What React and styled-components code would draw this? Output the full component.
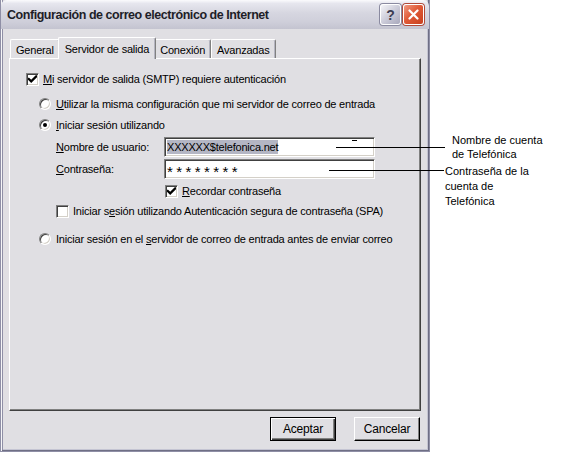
import styled, { createGlobalStyle } from "styled-components";

const GlobalStyle = createGlobalStyle`
  html, body {
    margin: 0;
    padding: 0;
    background: #ffffff;
  }
  body {
    font-family: "Liberation Sans", Arial, sans-serif;
    font-size: 11px;
    letter-spacing: -0.2px;
    color: #000;
  }
`;

const Stage = styled.div`
  position: relative;
  width: 580px;
  height: 452px;
  overflow: hidden;
`;

// ventana del diálogo (tema plateado de XP)
const Window = styled.div`
  width: 430px;
  height: 452px;
  box-sizing: border-box;
  display: flex;
  flex-direction: column;
  background: #e0dfe3;
  border: 1px solid #8f8fa6;
  border-top: none;
  box-shadow: inset 1px 0 #f6f6f8, inset -1px 0 #6f6f85, inset 0 -1px #6f6f85, inset 2px 0 #8f8fa6, inset -2px 0 #c4c4d2, inset 0 -2px #c4c4d2;
`;

const TitleBar = styled.div`
  height: 29px;
  flex: none;
  display: flex;
  align-items: center;
  padding: 0 5px 0 6px;
  background: linear-gradient(#fbfbfd 0%, #e6e6ee 12%, #d6d6e0 45%, #cfcfda 75%, #c4c4d0 100%);
  border-top-left-radius: 6px;
  border-top-right-radius: 6px;
`;

const Title = styled.span`
  flex: 1;
  font-family: "Liberation Sans", "DejaVu Sans", sans-serif;
  font-weight: bold;
  font-size: 12.5px;
  letter-spacing: -0.45px;
  color: #1e1e28;
`;

const CaptionButton = styled.div`
  width: 21px;
  height: 21px;
  box-sizing: border-box;
  border-radius: 3px;
  border: 1px solid #ffffff;
  margin-left: 2px;
  display: flex;
  align-items: center;
  justify-content: center;
  background: ${(p) =>
    p.$close
      ? "linear-gradient(135deg, #f09a82 0%, #e05a38 45%, #c8401e 100%)"
      : "linear-gradient(135deg, #f4f4f8 0%, #c8c8d6 55%, #a8a8bc 100%)"};
  box-shadow: 0 0 0 1px ${(p) => (p.$close ? "#b04a3a" : "#8a8aa0")};
  font-family: "Liberation Sans", sans-serif;
  font-weight: bold;
  font-size: 14px;
  color: #3c3c50;
`;

const Body = styled.div`
  flex: 1;
  display: flex;
  flex-direction: column;
  padding: 7px 8px 0 8px;
`;

const TabList = styled.div`
  display: flex;
  align-items: flex-end;
  height: 22px;
  padding-left: 1px;
  position: relative;
  z-index: 1;
`;

const Tab = styled.div`
  height: ${(p) => (p.$active ? "22px" : "19px")};
  box-sizing: border-box;
  padding: 0 ${(p) => (p.$active ? "6px" : "5px")};
  margin: ${(p) => (p.$active ? "0 -2px -1px -2px" : "0")};
  display: flex;
  align-items: center;
  padding-top: ${(p) => (p.$active ? "0" : "2px")};
  background: #e0dfe3;
  border-top: 1px solid #ffffff;
  border-left: 1px solid #ffffff;
  border-right: 1px solid #808080;
  box-shadow: inset -1px 0 #b4b4c0;
  border-top-left-radius: 2px;
  border-top-right-radius: 2px;
  position: relative;
  z-index: ${(p) => (p.$active ? 2 : 1)};
`;

const Panel = styled.div`
  height: 353px;
  box-sizing: border-box;
  border-top: 1px solid #ffffff;
  border-left: 1px solid #ffffff;
  border-right: 1px solid #404040;
  border-bottom: 1px solid #404040;
  box-shadow: inset -1px -1px #808080;
  display: flex;
  flex-direction: column;
  padding-top: 12px;
`;

const Row = styled.div`
  display: flex;
  align-items: center;
  height: ${(p) => p.$h || 16}px;
  margin-top: ${(p) => p.$gap || 0}px;
  padding-left: ${(p) => p.$indent || 0}px;
`;

const sunken = `
  box-sizing: border-box;
  border-top: 1px solid #808080;
  border-left: 1px solid #808080;
  border-right: 1px solid #ffffff;
  border-bottom: 1px solid #ffffff;
  box-shadow: inset 1px 1px #404040, inset -1px -1px #d4d0c8;
  background: #ffffff;
`;

const CheckBox = styled.span`
  ${sunken}
  width: 13px;
  height: 13px;
  flex: none;
  display: flex;
  align-items: center;
  justify-content: center;
  margin-right: 4px;
`;

const RadioDot = styled.span`
  width: 12px;
  height: 12px;
  flex: none;
  box-sizing: border-box;
  border-radius: 50%;
  background: #ffffff;
  border: 1px solid;
  border-color: #808080 #ffffff #ffffff #808080;
  box-shadow: inset 1px 1px #404040, inset -1px -1px #d4d0c8;
  display: flex;
  align-items: center;
  justify-content: center;
  margin-right: 5px;
  &::after {
    content: "";
    display: ${(p) => (p.$on ? "block" : "none")};
    width: 4px;
    height: 4px;
    border-radius: 50%;
    background: #000;
  }
`;

const Key = styled.span`
  text-decoration: underline;
`;

const FieldLabel = styled.span`
  width: 108px;
  flex: none;
`;

const TextBox = styled.div`
  ${sunken}
  width: 211px;
  height: 20px;
  display: flex;
  align-items: center;
  padding-left: 2px;
  position: relative;
`;

const Selected = styled.span`
  background: #b4b6c4;
  padding: 1px 0;
`;

const Masked = styled.span`
  font-size: 15px;
  letter-spacing: 3.4px;
  padding-top: 4px;
`;

const Caret = styled.span`
  position: absolute;
  top: 2px;
  left: 187px;
  width: 5px;
  height: 1px;
  background: #000;
`;

const Footer = styled.div`
  display: flex;
  justify-content: flex-end;
  gap: 18px;
  padding: 6px 1px 0 0;
`;

const Button = styled.div`
  width: 66px;
  height: 24px;
  box-sizing: border-box;
  display: flex;
  align-items: center;
  justify-content: center;
  background: #e0dfe3;
  border-top: 1px solid ${(p) => (p.$default ? "#000" : "#ffffff")};
  border-left: 1px solid ${(p) => (p.$default ? "#000" : "#ffffff")};
  border-right: 1px solid #000;
  border-bottom: 1px solid #000;
  box-shadow: ${(p) =>
    p.$default
      ? "inset 1px 1px #ffffff, inset -1px -1px #404040, inset -2px -2px #808080"
      : "inset -1px -1px #808080"};
  font-size: 12px;
`;

// líneas de anotación que cruzan sobre el diálogo
const Leader = styled.div`
  position: absolute;
  height: 1px;
  background: #000;
  top: ${(p) => p.$y}px;
  left: ${(p) => p.$x}px;
  width: ${(p) => p.$w}px;
`;

const Note = styled.div`
  position: absolute;
  top: ${(p) => p.$y}px;
  left: ${(p) => p.$x}px;
  font-family: "Liberation Sans", Arial, sans-serif;
  font-size: 11px;
  letter-spacing: 0;
  line-height: ${(p) => p.$lh}px;
  color: #000;
`;

function Check() {
  return (
    <svg width="9" height="9" viewBox="0 0 7 7">
      <path d="M0 2.5 L2.5 5 L7 0.5" stroke="#000" strokeWidth="1.8" fill="none" />
    </svg>
  );
}

function CloseGlyph() {
  return (
    <svg width="11" height="11" viewBox="0 0 11 11">
      <path d="M1.5 1.5 L9.5 9.5 M9.5 1.5 L1.5 9.5" stroke="#fff" strokeWidth="2.2" strokeLinecap="round" />
    </svg>
  );
}

export default function App() {
  return (
    <Stage>
      <GlobalStyle />
      <Window>
        <TitleBar>
          <Title>Configuración de correo electrónico de Internet</Title>
          <CaptionButton>?</CaptionButton>
          <CaptionButton $close>
            <CloseGlyph />
          </CaptionButton>
        </TitleBar>
        <Body>
          <TabList>
            <Tab>General</Tab>
            <Tab $active>Servidor de salida</Tab>
            <Tab>Conexión</Tab>
            <Tab>Avanzadas</Tab>
          </TabList>
          <Panel>
            <Row $indent={16}>
              <CheckBox>
                <Check />
              </CheckBox>
              <span>
                <Key>M</Key>i servidor de salida (SMTP) requiere autenticación
              </span>
            </Row>
            <Row $indent={29} $gap={9}>
              <RadioDot />
              <span>
                <Key>U</Key>tilizar la misma configuración que mi servidor de correo de entrada
              </span>
            </Row>
            <Row $indent={29} $gap={5}>
              <RadioDot $on />
              <span>
                <Key>I</Key>niciar sesión utilizando
              </span>
            </Row>
            <Row $indent={46} $gap={4} $h={20}>
              <FieldLabel>
                <Key>N</Key>ombre de usuario:
              </FieldLabel>
              <TextBox>
                <Selected>XXXXXX$telefonica.net</Selected>
                <Caret />
              </TextBox>
            </Row>
            <Row $indent={46} $gap={2} $h={20}>
              <FieldLabel>
                <Key>C</Key>ontraseña:
              </FieldLabel>
              <TextBox>
                <Masked>********</Masked>
              </TextBox>
            </Row>
            <Row $indent={155} $gap={4}>
              <CheckBox>
                <Check />
              </CheckBox>
              <span>
                <Key>R</Key>ecordar contraseña
              </span>
            </Row>
            <Row $indent={46} $gap={4}>
              <CheckBox />
              <span>
                Iniciar s<Key>e</Key>sión utilizando Autenticación segura de contraseña (SPA)
              </span>
            </Row>
            <Row $indent={29} $gap={12}>
              <RadioDot />
              <span>
                Iniciar sesión en el <Key>s</Key>ervidor de correo de entrada antes de enviar correo
              </span>
            </Row>
          </Panel>
          <Footer>
            <Button $default>Aceptar</Button>
            <Button>Cancelar</Button>
          </Footer>
        </Body>
      </Window>
      <Leader $x={336} $y={147} $w={109} />
      <Leader $x={329} $y={170} $w={115} />
      <Note $x={452} $y={133} $lh={14}>
        Nombre de cuenta
        <br />
        de Telefónica
      </Note>
      <Note $x={445} $y={164} $lh={15}>
        Contraseña de la
        <br />
        cuenta de
        <br />
        Telefónica
      </Note>
    </Stage>
  );
}
